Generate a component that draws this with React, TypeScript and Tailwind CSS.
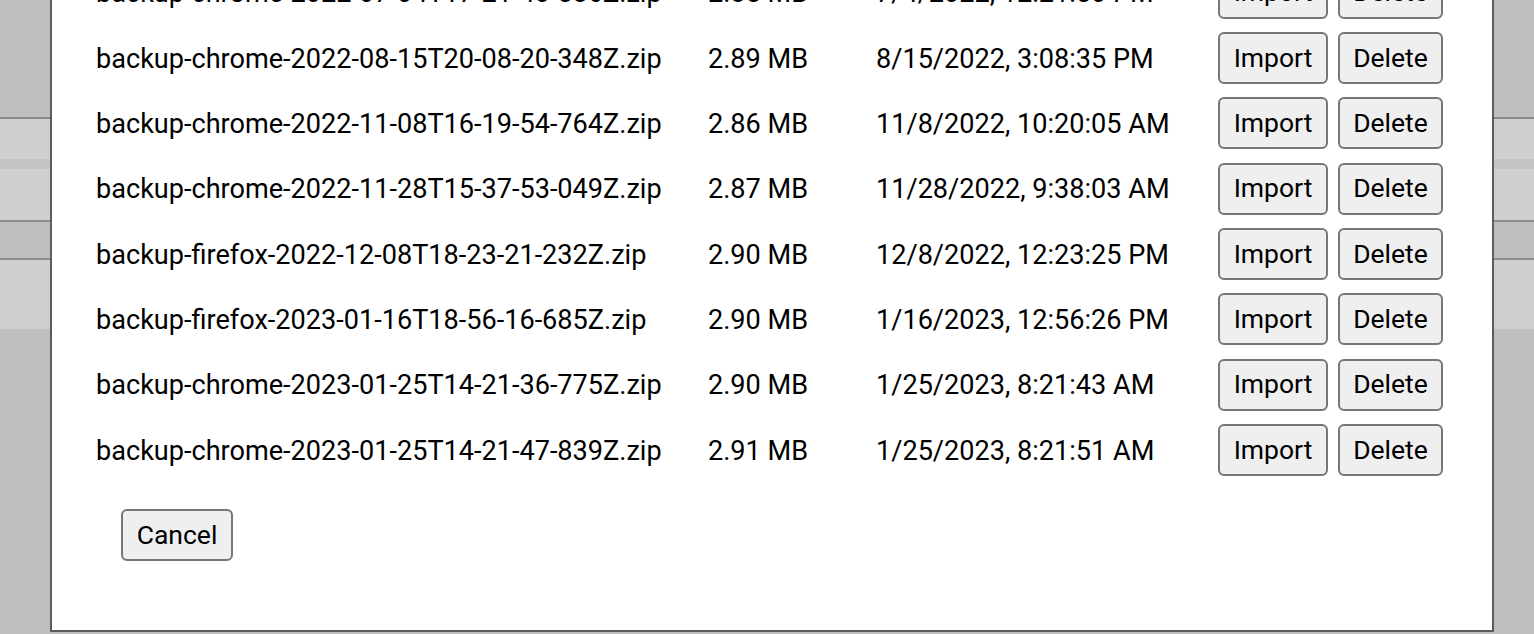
import React from 'react';

const backups = [
  { name: 'backup-chrome-2022-07-04T17-21-40-586Z.zip', size: '2.85 MB', date: '7/4/2022, 12:21:50 PM' },
  { name: 'backup-chrome-2022-08-15T20-08-20-348Z.zip', size: '2.89 MB', date: '8/15/2022, 3:08:35 PM' },
  { name: 'backup-chrome-2022-11-08T16-19-54-764Z.zip', size: '2.86 MB', date: '11/8/2022, 10:20:05 AM' },
  { name: 'backup-chrome-2022-11-28T15-37-53-049Z.zip', size: '2.87 MB', date: '11/28/2022, 9:38:03 AM' },
  { name: 'backup-firefox-2022-12-08T18-23-21-232Z.zip', size: '2.90 MB', date: '12/8/2022, 12:23:25 PM' },
  { name: 'backup-firefox-2023-01-16T18-56-16-685Z.zip', size: '2.90 MB', date: '1/16/2023, 12:56:26 PM' },
  { name: 'backup-chrome-2023-01-25T14-21-36-775Z.zip', size: '2.90 MB', date: '1/25/2023, 8:21:43 AM' },
  { name: 'backup-chrome-2023-01-25T14-21-47-839Z.zip', size: '2.91 MB', date: '1/25/2023, 8:21:51 AM' },
];

const btn =
  'h-[52px] rounded-[6px] border-2 border-[#767676] bg-[#efefef] text-[26.5px] text-black leading-none';

const App = () => {
  return (
    <div className="relative h-[634px] w-full overflow-hidden bg-[#bebebe] font-['Roboto',sans-serif]">
      {/* page behind the overlay */}
      <div className="flex flex-col">
        <div className="h-[117px] bg-[#bebebe]" />
        <div className="h-[2px] bg-[#8a8a8a]" />
        <div className="h-[40px] bg-[#cfcfcf]" />
        <div className="h-[10px] bg-[#c4c4c4]" />
        <div className="h-[51px] bg-[#cfcfcf]" />
        <div className="h-[2px] bg-[#8a8a8a]" />
        <div className="h-[36px] bg-[#bebebe]" />
        <div className="h-[2px] bg-[#8a8a8a]" />
        <div className="h-[69px] bg-[#cfcfcf]" />
        <div className="flex-1 bg-[#bebebe]" />
      </div>

      {/* backup dialog */}
      <div className="absolute left-[50px] right-[40px] top-[-200px] bottom-[2px] flex flex-col justify-end overflow-hidden border-2 border-[#5c5c5c] bg-white pb-[69px]">
        <div className="flex flex-col pl-[44px]">
          {backups.map((b) => (
            <div key={b.name} className="flex h-[65.33px] items-center text-[27.1px] text-black">
              <div className="w-[612px] whitespace-nowrap pt-[2px]">{b.name}</div>
              <div className="w-[168px] whitespace-nowrap pt-[2px]">{b.size}</div>
              <div className="w-[342px] whitespace-nowrap pt-[2px]">{b.date}</div>
              <div className="flex gap-[10px]">
                <button className={`${btn} w-[110px]`}>Import</button>
                <button className={`${btn} w-[105px]`}>Delete</button>
              </div>
            </div>
          ))}
        </div>
        <div className="mt-[26.33px] pl-[69px]">
          <button className={`${btn} w-[112px]`}>Cancel</button>
        </div>
      </div>
    </div>
  );
};

export default App;
